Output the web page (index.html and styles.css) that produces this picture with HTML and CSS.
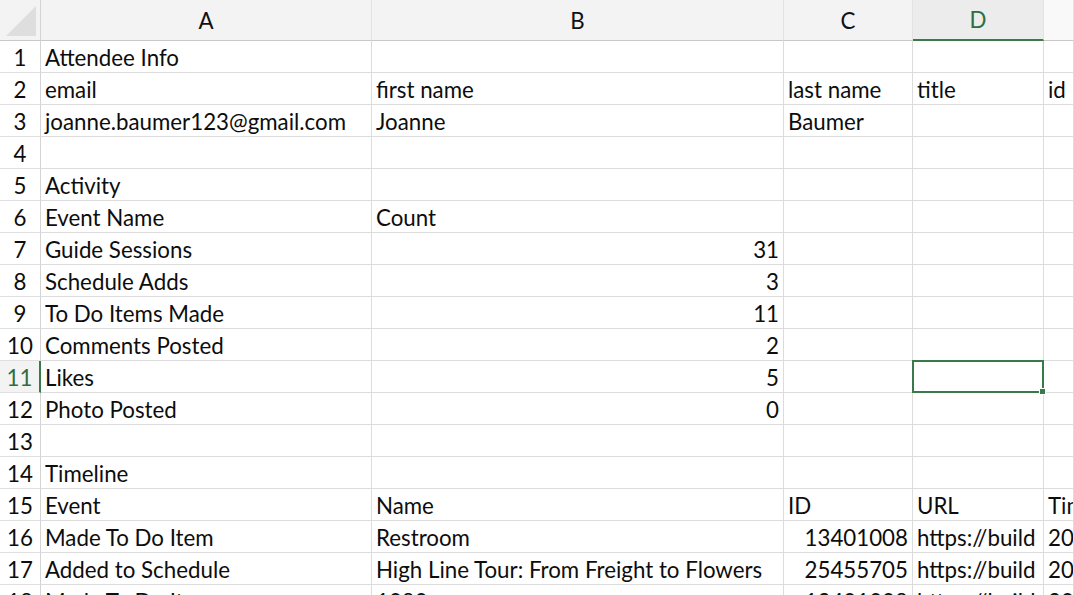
FILE: index.html
```html
<!DOCTYPE html>
<html>
<head>
<meta charset="utf-8">
<link rel="stylesheet" href="styles.css">
</head>
<body>
<div class="sheet">
  <div class="corner"><svg width="40" height="40" viewBox="0 0 40 40"><polygon points="6,36 36,36 36,6" fill="#dedede"/></svg></div>
  <div class="colh">A</div>
  <div class="colh">B</div>
  <div class="colh">C</div>
  <div class="colh sel">D</div>
  <div class="colh light"></div>

  <div class="rowh">1</div><div class="c">Attendee Info</div><div class="c"></div><div class="c"></div><div class="c"></div><div class="c"></div>
  <div class="rowh">2</div><div class="c">email</div><div class="c">first name</div><div class="c">last name</div><div class="c">title</div><div class="c">id</div>
  <div class="rowh">3</div><div class="c">joanne.baumer123@gmail.com</div><div class="c">Joanne</div><div class="c">Baumer</div><div class="c"></div><div class="c"></div>
  <div class="rowh">4</div><div class="c"></div><div class="c"></div><div class="c"></div><div class="c"></div><div class="c"></div>
  <div class="rowh">5</div><div class="c">Activity</div><div class="c"></div><div class="c"></div><div class="c"></div><div class="c"></div>
  <div class="rowh">6</div><div class="c">Event Name</div><div class="c">Count</div><div class="c"></div><div class="c"></div><div class="c"></div>
  <div class="rowh">7</div><div class="c">Guide Sessions</div><div class="c num">31</div><div class="c"></div><div class="c"></div><div class="c"></div>
  <div class="rowh">8</div><div class="c">Schedule Adds</div><div class="c num">3</div><div class="c"></div><div class="c"></div><div class="c"></div>
  <div class="rowh">9</div><div class="c">To Do Items Made</div><div class="c num">11</div><div class="c"></div><div class="c"></div><div class="c"></div>
  <div class="rowh">10</div><div class="c">Comments Posted</div><div class="c num">2</div><div class="c"></div><div class="c"></div><div class="c"></div>
  <div class="rowh selrow">11</div><div class="c">Likes</div><div class="c num">5</div><div class="c"></div><div class="c active"><span class="handle"></span></div><div class="c"></div>
  <div class="rowh">12</div><div class="c">Photo Posted</div><div class="c num">0</div><div class="c"></div><div class="c"></div><div class="c"></div>
  <div class="rowh">13</div><div class="c"></div><div class="c"></div><div class="c"></div><div class="c"></div><div class="c"></div>
  <div class="rowh">14</div><div class="c">Timeline</div><div class="c"></div><div class="c"></div><div class="c"></div><div class="c"></div>
  <div class="rowh">15</div><div class="c">Event</div><div class="c">Name</div><div class="c">ID</div><div class="c">URL</div><div class="c">Time</div>
  <div class="rowh">16</div><div class="c">Made To Do Item</div><div class="c">Restroom</div><div class="c num">13401008</div><div class="c">https://build</div><div class="c">2021</div>
  <div class="rowh">17</div><div class="c">Added to Schedule</div><div class="c">High Line Tour: From Freight to Flowers</div><div class="c num">25455705</div><div class="c">https://build</div><div class="c">2021</div>
  <div class="rowh">18</div><div class="c">Made To Do Item</div><div class="c">1080</div><div class="c num">13401008</div><div class="c">https://build</div><div class="c">2021</div>
</div>
</body>
</html>
```

FILE: styles.css
```css
html, body {
  margin: 0;
  padding: 0;
  background: #ffffff;
  overflow: hidden;
}
body {
  width: 1074px;
  height: 595px;
  font-family: "Lato", "Liberation Sans", sans-serif;
  font-size: 22.3px;
  color: #0d0d0d;
}
.sheet {
  display: grid;
  grid-template-columns: 41px 331px 412px 129px 131px 30px;
  grid-template-rows: 41px repeat(18, 32px);
  width: 1074px;
}
.corner {
  background: #f3f3f3;
  border-right: 1px solid #d4d4d4;
  border-bottom: 1px solid #c8c8c8;
  box-sizing: border-box;
}
.corner svg { display: block; }
.colh {
  background: #f3f3f3;
  border-right: 1px solid #e2e2e2;
  border-bottom: 1px solid #c8c8c8;
  box-sizing: border-box;
  display: flex;
  align-items: center;
  justify-content: center;
  color: #111111;
}
.colh.sel {
  color: #2f6e3d;
  background: #ececec;
  border-bottom: 2px solid #3a7a4a;
}
.colh.light {
  background: #f9f9f9;
}
.rowh {
  border-right: 1px solid #d4d4d4;
  border-bottom: 1px solid #e0e0e0;
  box-sizing: border-box;
  display: flex;
  align-items: center;
  justify-content: center;
  padding-top: 1px;
  background: #ffffff;
}
.rowh.selrow {
  color: #2f6e3d;
  background: #f3f3f3;
  border-right: 2px solid #3a7a4a;
}
.c {
  border-right: 1px solid #dcdcdc;
  border-bottom: 1px solid #dcdcdc;
  box-sizing: border-box;
  display: flex;
  align-items: center;
  padding: 1px 4px 0 4px;
  white-space: nowrap;
  overflow: hidden;
  position: relative;
}
.c.num {
  justify-content: flex-end;
}
.c.active {
  overflow: visible;
}
.c.active::after {
  content: "";
  position: absolute;
  left: -1px;
  top: -1px;
  right: -1px;
  bottom: -1px;
  border: 2px solid #3a7a4a;
  pointer-events: none;
}
.handle {
  position: absolute;
  right: -3px;
  bottom: -3px;
  width: 5px;
  height: 5px;
  background: #3a7a4a;
  border: 1px solid #ffffff;
  z-index: 2;
}
```
